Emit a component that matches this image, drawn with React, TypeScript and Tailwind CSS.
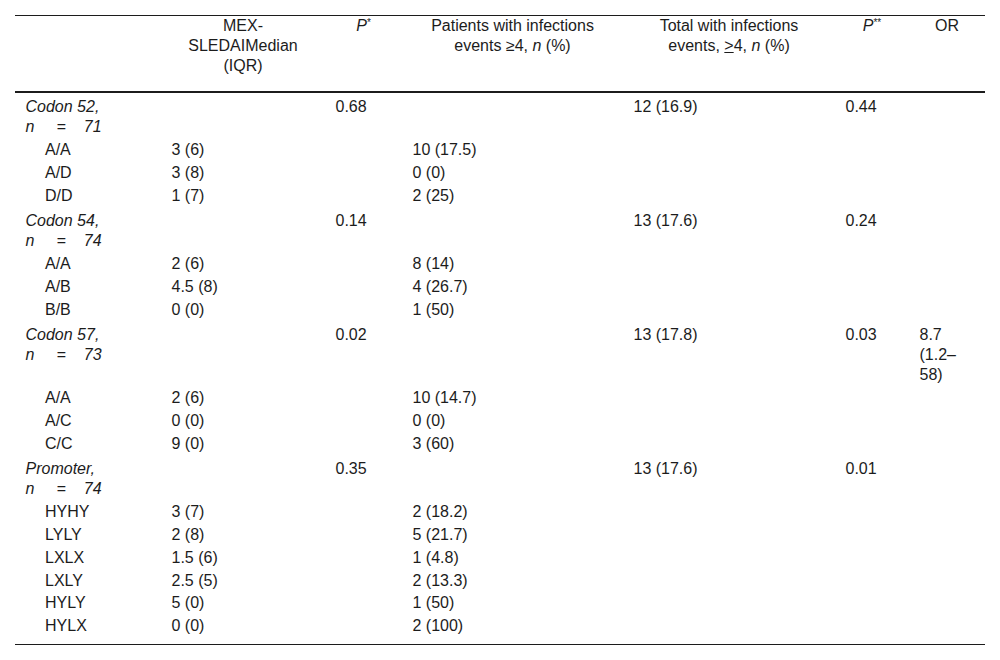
import React from 'react';

type Sub = { label: string; median: string; patients: string };
type Group = {
  name: string;
  n: string;
  p1: string;
  total: string;
  p2: string;
  or?: string;
  subs: Sub[];
};

const groups: Group[] = [
  {
    name: 'Codon 52,',
    n: '71',
    p1: '0.68',
    total: '12 (16.9)',
    p2: '0.44',
    subs: [
      { label: 'A/A', median: '3 (6)', patients: '10 (17.5)' },
      { label: 'A/D', median: '3 (8)', patients: '0 (0)' },
      { label: 'D/D', median: '1 (7)', patients: '2 (25)' },
    ],
  },
  {
    name: 'Codon 54,',
    n: '74',
    p1: '0.14',
    total: '13 (17.6)',
    p2: '0.24',
    subs: [
      { label: 'A/A', median: '2 (6)', patients: '8 (14)' },
      { label: 'A/B', median: '4.5 (8)', patients: '4 (26.7)' },
      { label: 'B/B', median: '0 (0)', patients: '1 (50)' },
    ],
  },
  {
    name: 'Codon 57,',
    n: '73',
    p1: '0.02',
    total: '13 (17.8)',
    p2: '0.03',
    or: '8.7 (1.2–58)',
    subs: [
      { label: 'A/A', median: '2 (6)', patients: '10 (14.7)' },
      { label: 'A/C', median: '0 (0)', patients: '0 (0)' },
      { label: 'C/C', median: '9 (0)', patients: '3 (60)' },
    ],
  },
  {
    name: 'Promoter,',
    n: '74',
    p1: '0.35',
    total: '13 (17.6)',
    p2: '0.01',
    subs: [
      { label: 'HYHY', median: '3 (7)', patients: '2 (18.2)' },
      { label: 'LYLY', median: '2 (8)', patients: '5 (21.7)' },
      { label: 'LXLX', median: '1.5 (6)', patients: '1 (4.8)' },
      { label: 'LXLY', median: '2.5 (5)', patients: '2 (13.3)' },
      { label: 'HYLY', median: '5 (0)', patients: '1 (50)' },
      { label: 'HYLX', median: '0 (0)', patients: '2 (100)' },
    ],
  },
];

// group rows sit a little looser than the genotype rows under them
const gtd = 'px-[10.5px] pt-[3.5px] pb-[2.2px] align-top text-left font-normal';
const std = 'px-[10.5px] py-[1.4px] align-top text-left font-normal';
const th = 'px-[10.5px] pt-0 pb-[15px] align-top text-center font-normal';

const App: React.FC = () => {
  return (
    <div className="min-h-[660px] bg-white px-[15px] pt-[15px] text-[16px] leading-[20px] text-[#1c1c1c] font-['Liberation_Sans',Arial,sans-serif]">
      <table className="w-[970px] table-fixed border-collapse">
        <colgroup>
          <col className="w-[146px]" />
          <col className="w-[164px]" />
          <col className="w-[77px]" />
          <col className="w-[221px]" />
          <col className="w-[212px]" />
          <col className="w-[74px]" />
          <col className="w-[76px]" />
        </colgroup>
        <thead>
          <tr className="border-t border-b-2 border-[#1c1c1c]">
            <th className={th}></th>
            <th className={th}>
              MEX-
              <br />
              SLEDAIMedian
              <br />
              (IQR)
            </th>
            <th className={th}>
              <i>P</i>
              <sup className="text-[10px]">*</sup>
            </th>
            <th className={th}>
              Patients with infections
              <br />
              events ≥4, <i>n</i> (%)
            </th>
            <th className={th}>
              Total with infections
              <br />
              events, <span className="underline">&gt;</span>4, <i>n</i> (%)
            </th>
            <th className={th}>
              <i>P</i>
              <sup className="text-[10px]">**</sup>
            </th>
            <th className={th}>OR</th>
          </tr>
        </thead>
        <tbody className="border-b border-[#1c1c1c]">
          {groups.map((g, gi) => (
            <React.Fragment key={g.name}>
              <tr>
                <td className={gtd}>
                  <i>{g.name}</i>
                  <br />
                  <i>n</i>
                  <i className="ml-[22px]">=</i>
                  <i className="ml-[18px]">{g.n}</i>
                </td>
                <td className={gtd}></td>
                <td className={gtd}>{g.p1}</td>
                <td className={gtd}></td>
                <td className={gtd}>{g.total}</td>
                <td className={gtd}>{g.p2}</td>
                <td className={gtd}>{g.or ?? ''}</td>
              </tr>
              {g.subs.map((s, si) => {
                const last = gi === groups.length - 1 && si === g.subs.length - 1;
                const c = last ? `${std} pb-[7.5px]` : std;
                return (
                  <tr key={g.name + s.label}>
                    <td className={`${c} pl-[30px]`}>{s.label}</td>
                    <td className={c}>{s.median}</td>
                    <td className={c}></td>
                    <td className={c}>{s.patients}</td>
                    <td className={c}></td>
                    <td className={c}></td>
                    <td className={c}></td>
                  </tr>
                );
              })}
            </React.Fragment>
          ))}
        </tbody>
      </table>
    </div>
  );
};

export default App;
